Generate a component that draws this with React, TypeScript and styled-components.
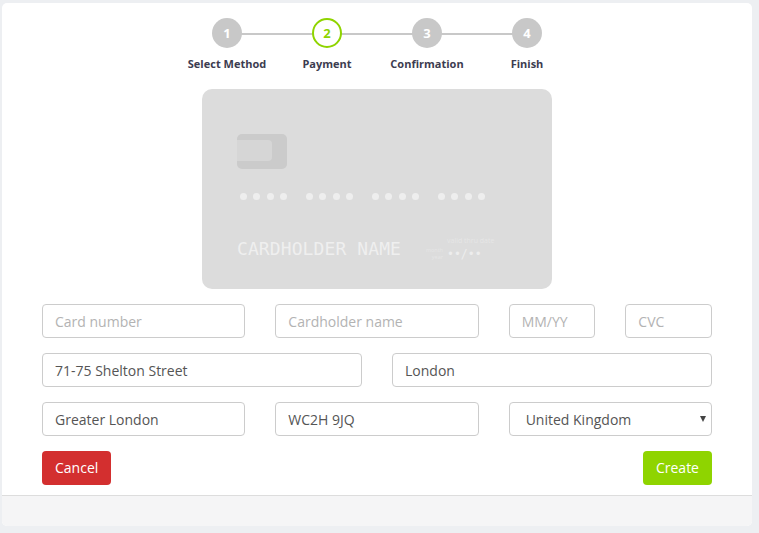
import React from "react";
import styled, { createGlobalStyle } from "styled-components";

const Global = createGlobalStyle`
  html, body { margin: 0; padding: 0; background: #edeff2; }
  body { font-family: "Open Sans", "Noto Sans", sans-serif; width: 759px; height: 533px; overflow: hidden; }
  * { box-sizing: border-box; }
`;

const Page = styled.div`
  padding: 3px 7px 7px 2px;
  height: 533px;
`;
const Panel = styled.div`
  width: 750px;
  height: 523px;
  background: #fff;
  border-radius: 5px;
  display: flex;
  flex-direction: column;
  overflow: hidden;
`;
const Body = styled.div`
  height: 492px;
  padding: 15px 40px 0;
`;
const Stepper = styled.ol`
  list-style: none;
  margin: 0;
  padding: 0;
  display: flex;
  justify-content: center;
`;
const Step = styled.li`
  position: relative;
  width: 100px;
  display: flex;
  flex-direction: column;
  align-items: center;
  &:not(:last-child)::after {
    content: "";
    position: absolute;
    top: 15px;
    left: 50%;
    width: 100px;
    height: 2px;
    background: #c8c8c8;
  }
`;
const Bullet = styled.span<{ $active?: boolean }>`
  position: relative;
  z-index: 1;
  width: 30px;
  height: 30px;
  border-radius: 50%;
  display: flex;
  align-items: center;
  justify-content: center;
  font-size: 13px;
  font-weight: 700;
  background: ${(p) => (p.$active ? "#fff" : "#c8c8c8")};
  border: ${(p) => (p.$active ? "2px solid #8fd400" : "none")};
  color: ${(p) => (p.$active ? "#8fd400" : "#fff")};
`;
const StepLabel = styled.span`
  margin-top: 8px;
  font-size: 11px;
  line-height: 16px;
  font-weight: 700;
  color: #3c3c50;
  white-space: nowrap;
`;
const Card = styled.div`
  width: 350px;
  height: 200px;
  margin: 17px auto 15px;
  padding: 45px 35px 0;
  background: #dcdcdc;
  border-radius: 10px;
  display: flex;
  flex-direction: column;
`;
const Chip = styled.div`
  position: relative;
  width: 50px;
  height: 35px;
  background: #cbcbcb;
  border-radius: 5px;
  overflow: hidden;
  &::after {
    content: "";
    position: absolute;
    left: 0;
    top: 6px;
    width: 35px;
    height: 21px;
    background: #d6d6d6;
    border-radius: 0 4px 4px 0;
  }
`;
const Digits = styled.div`
  display: flex;
  gap: 19px;
  margin-top: 24px;
  padding-left: 3px;
`;
const DigitGroup = styled.div`
  display: flex;
  gap: 6.33px;
`;
const Dot = styled.span`
  width: 7px;
  height: 7px;
  border-radius: 50%;
  background: #eeeeee;
`;
const CardBottom = styled.div`
  display: flex;
  align-items: flex-end;
  margin-top: 37px;
`;
const Holder = styled.div`
  font-family: "DejaVu Sans Mono", "Liberation Mono", monospace;
  font-size: 18px;
  line-height: 24px;
  color: #efefef;
  letter-spacing: 0.1px;
  white-space: nowrap;
  width: 184px;
`;
const Valid = styled.div`
  font-size: 5.5px;
  line-height: 7px;
  text-align: right;
  color: #e6e6e6;
  width: 22px;
`;
const ExpiryBlock = styled.div`
  margin-left: 4px;
  display: flex;
  flex-direction: column;
`;
const ExpiryCaption = styled.div`
  font-size: 7px;
  line-height: 8px;
  margin-bottom: 3px;
  color: #e6e6e6;
  white-space: nowrap;
`;
const ExpiryValue = styled.div`
  font-family: "DejaVu Sans Mono", "Liberation Mono", monospace;
  font-size: 11.5px;
  line-height: 13px;
  color: #ededed;
`;
const Row = styled.div<{ $cols: string }>`
  display: grid;
  grid-template-columns: ${(p) => p.$cols};
  column-gap: 30px;
  margin-bottom: 15px;
`;
const Field = styled.input`
  width: 100%;
  height: 34px;
  padding: 0 12px;
  font-family: "Open Sans", sans-serif;
  font-size: 14px;
  color: #555;
  background: #fff;
  border: 1px solid #ccc;
  border-radius: 4px;
  outline: none;
  &::placeholder { color: #b3b3b3; opacity: 1; }
`;
const SelectWrap = styled.div`
  position: relative;
  &::after {
    content: "";
    position: absolute;
    right: 6px;
    top: 14px;
    border-left: 3px solid transparent;
    border-right: 3px solid transparent;
    border-top: 6px solid #444;
  }
`;
const Select = styled.select`
  width: 100%;
  height: 34px;
  padding: 0 12px 0 16px;
  font-family: "Open Sans", sans-serif;
  font-size: 14px;
  color: #555;
  background: #fff;
  border: 1px solid #ccc;
  border-radius: 4px;
  appearance: none;
  outline: none;
`;
const Actions = styled.div`
  display: flex;
  justify-content: space-between;
`;
const Button = styled.button<{ $bg: string }>`
  height: 34px;
  padding: 0 13px;
  border: none;
  border-radius: 4px;
  font-family: "Open Sans", sans-serif;
  font-size: 14px;
  line-height: 32px;
  color: #fff;
  background: ${(p) => p.$bg};
`;
const Footer = styled.div`
  flex: 1;
  background: #f5f5f6;
  border-top: 1px solid #dddddd;
`;

const steps = ["Select Method", "Payment", "Confirmation", "Finish"];

export default function App() {
  return (
    <Page>
      <Global />
      <Panel>
        <Body>
          <Stepper>
            {steps.map((s, i) => (
              <Step key={s}>
                <Bullet $active={i === 1}>{i + 1}</Bullet>
                <StepLabel>{s}</StepLabel>
              </Step>
            ))}
          </Stepper>
          <Card>
            <Chip />
            <Digits>
              {[0, 1, 2, 3].map((g) => (
                <DigitGroup key={g}>
                  {[0, 1, 2, 3].map((d) => (
                    <Dot key={d} />
                  ))}
                </DigitGroup>
              ))}
            </Digits>
            <CardBottom>
              <Holder>CARDHOLDER NAME</Holder>
              <Valid>month year</Valid>
              <ExpiryBlock>
                <ExpiryCaption>valid thru date</ExpiryCaption>
                <ExpiryValue>••/••</ExpiryValue>
              </ExpiryBlock>
            </CardBottom>
          </Card>
          <Row $cols="203.33px 203.33px 86.67px 86.67px">
            <Field placeholder="Card number" />
            <Field placeholder="Cardholder name" />
            <Field placeholder="MM/YY" />
            <Field placeholder="CVC" />
          </Row>
          <Row $cols="320px 320px">
            <Field defaultValue="71-75 Shelton Street" />
            <Field defaultValue="London" />
          </Row>
          <Row $cols="203.33px 203.33px 203.33px">
            <Field defaultValue="Greater London" />
            <Field defaultValue="WC2H 9JQ" />
            <SelectWrap>
              <Select defaultValue="United Kingdom">
                <option>United Kingdom</option>
              </Select>
            </SelectWrap>
          </Row>
          <Actions>
            <Button $bg="#d32f2f">Cancel</Button>
            <Button $bg="#8fd400">Create</Button>
          </Actions>
        </Body>
        <Footer />
      </Panel>
    </Page>
  );
}
